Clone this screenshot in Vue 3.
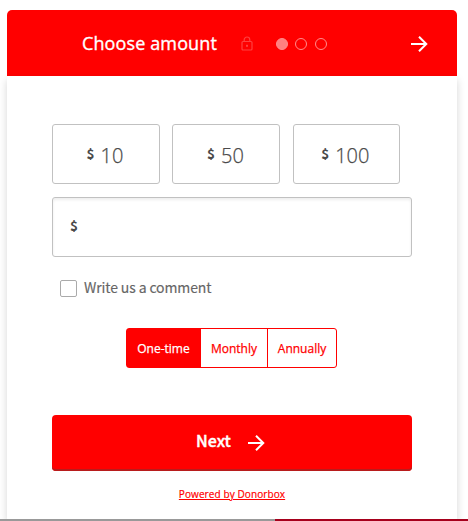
<template>
  <div class="page">
    <div class="donation-form">
      <header class="form-header">
        <h1 class="title">Choose amount</h1>
        <svg class="lock" viewBox="0 0 12 15" width="12" height="15">
          <rect x="1" y="5.5" width="10" height="8.5" rx="1" />
          <path d="M3.2 5.5V3.8a2.8 2.8 0 0 1 5.6 0v1.7" />
          <rect class="keyhole" x="5" y="8.8" width="2" height="2" />
        </svg>
        <div class="steps">
          <span
            v-for="step in 3"
            :key="step"
            class="step"
            :class="{ active: currentStep === step }"
          ></span>
        </div>
        <button class="header-next" @click="nextStep">
          <svg class="arrow" viewBox="0 0 18 18" width="18" height="18">
            <path d="M1 9h15M9 1.7L16.3 9 9 16.3" />
          </svg>
        </button>
      </header>

      <main class="form-body">
        <div class="amounts">
          <button
            v-for="amount in amounts"
            :key="amount"
            class="amount"
            @click="customAmount = String(amount)"
          >
            <span class="currency">$</span>
            <span class="value">{{ amount }}</span>
          </button>
        </div>

        <label class="custom-amount">
          <span class="currency">$</span>
          <input v-model="customAmount" type="text" />
        </label>

        <label class="comment">
          <input v-model="withComment" type="checkbox" />
          <span class="comment-text">Write us a comment</span>
        </label>

        <div class="intervals">
          <button
            v-for="item in intervals"
            :key="item"
            class="interval"
            :class="{ active: interval === item }"
            @click="interval = item"
          >{{ item }}</button>
        </div>

        <button class="next" @click="nextStep">
          <span class="next-text">Next</span>
          <svg class="arrow" viewBox="0 0 18 18" width="18" height="18">
            <path d="M1 9h15M9 1.7L16.3 9 9 16.3" />
          </svg>
        </button>

        <a class="powered" href="#">Powered by Donorbox</a>
      </main>
    </div>
    <div class="strip"></div>
  </div>
</template>

<script setup>
import { ref } from 'vue';

const amounts = [10, 50, 100];
const intervals = ['One-time', 'Monthly', 'Annually'];

const currentStep = ref(1);
const customAmount = ref('');
const withComment = ref(false);
const interval = ref('One-time');

const nextStep = () => {
  if (currentStep.value < 3) {
    currentStep.value++;
  }
};
</script>

<style>
body {
  background: #fff;
  overflow: hidden;
}
</style>

<style scoped>
* {
  box-sizing: border-box;
}

.page {
  display: flex;
  flex-direction: column;
  height: 521px;
  padding-top: 10px;
  overflow: hidden;
  font-family: "Open Sans", "Noto Sans", sans-serif;
}

button {
  margin: 0;
  padding: 0;
  border: 0;
  background: none;
  font-family: inherit;
  cursor: pointer;
}

.donation-form {
  width: 450px;
  height: 509px;
  flex: none;
  margin-left: 7px;
}

.form-header {
  display: flex;
  align-items: center;
  height: 66px;
  padding: 0 29px 0 75px;
  background: #f00;
  border-radius: 5px 5px 0 0;
  color: #fff;
}

.title {
  width: 135px;
  margin: 0;
  font-size: 18px;
  font-weight: 500;
  line-height: 24px;
  letter-spacing: 0.12px;
  white-space: nowrap;
  -webkit-text-stroke: 0.35px currentColor;
}

.lock {
  margin-left: 24px;
  fill: none;
  stroke: #ff4040;
  stroke-width: 1.2;
}

.keyhole {
  fill: #ff4040;
  stroke: none;
}

.steps {
  display: flex;
  gap: 7.7px;
  margin: 1px 0 0 22.6px;
}

.step {
  width: 12px;
  height: 12px;
  border: 1px solid #ff8c8c;
  border-radius: 50%;
}

.step.active {
  background: #ff8080;
}

.arrow {
  display: block;
  fill: none;
  stroke: #fff;
  stroke-width: 2;
}

.header-next {
  margin: 2px 0 0 auto;
}

.form-body {
  display: flex;
  flex-direction: column;
  height: 443px;
  padding: 48px 45px 0;
  box-shadow: 0 4px 8px rgba(0, 0, 0, 0.17);
}

.amounts {
  display: grid;
  grid-template-columns: 108px 108px 107px;
  column-gap: 12.4px;
}

.amount {
  display: flex;
  justify-content: center;
  height: 60px;
  padding: 18px 2px 0 0;
  border: 1px solid #c1c1c1;
  border-radius: 3px;
  color: #4a4a4a;
}

.currency {
  width: 8px;
  font-family: "Noto Sans CJK SC", sans-serif;
  font-size: 13.5px;
  font-weight: 700;
  line-height: 20px;
  color: #4a4a4a;
}

.value {
  margin-left: 6px;
  font-size: 20px;
  font-weight: 300;
  line-height: 26px;
  -webkit-text-stroke: 0.25px currentColor;
}

.custom-amount {
  display: flex;
  align-items: center;
  height: 60px;
  margin-top: 13px;
  padding: 0 17px 4px;
  border: 1px solid #c1c1c1;
  border-radius: 3px;
  box-shadow: inset 0 2px 3px rgba(0, 0, 0, 0.07);
}

.custom-amount input {
  flex: 1;
  min-width: 0;
  border: 0;
  outline: 0;
  background: none;
  font: 300 20px "Open Sans", sans-serif;
}

.comment {
  display: flex;
  align-items: center;
  height: 17px;
  margin: 23px 0 0 8px;
}

.comment input {
  appearance: none;
  width: 17px;
  height: 17px;
  margin: 0;
  border: 1px solid #aaa;
  border-radius: 2px;
}

.comment input:checked {
  background: #f00;
}

.comment-text {
  margin: -2px 0 0 7px;
  font-family: "Noto Sans CJK SC", sans-serif;
  font-size: 14px;
  line-height: 17px;
  letter-spacing: -0.12px;
  color: #666;
  -webkit-text-stroke: 0.15px currentColor;
}

.intervals {
  display: grid;
  grid-template-columns: 74px 67px 68px;
  align-self: center;
  width: 211px;
  height: 40px;
  margin: 31px 0 0 -1px;
  border: 1px solid #f00;
  border-radius: 3px;
}

.interval {
  border-right: 1px solid #f00;
  color: #f00;
  font-size: 12px;
  font-weight: 500;
  -webkit-text-stroke: 0.25px currentColor;
}

.interval:last-child {
  border-right: 0;
}

.interval.active {
  background: #f00;
  color: #fff;
}

.next {
  display: flex;
  justify-content: center;
  align-items: center;
  height: 56px;
  margin-top: 47px;
  padding-right: 3px;
  background: #f00;
  border-radius: 4px;
  box-shadow: inset 0 -2px 0 #b81c1c;
  color: #fff;
}

.next-text {
  margin: -6px 16px 0 0;
  font-family: "Noto Sans CJK SC", sans-serif;
  font-size: 16px;
  font-weight: 500;
  -webkit-text-stroke: 0.4px currentColor;
}

.powered {
  align-self: center;
  margin-top: 16px;
  color: #f00;
  font-size: 10px;
  line-height: 14px;
  letter-spacing: 0.1px;
  -webkit-text-stroke: 0.2px currentColor;
}

.strip {
  position: relative;
  height: 2px;
  flex: none;
  background: linear-gradient(to right, #999 275px, #a6001c 275px);
}
</style>
